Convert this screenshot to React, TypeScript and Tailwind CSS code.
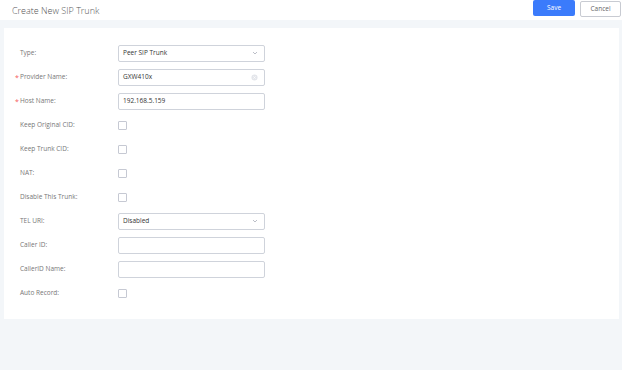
import React from 'react';

type Row =
  | { label: string; required?: boolean; kind: 'select'; value: string }
  | { label: string; required?: boolean; kind: 'input'; value: string; clear?: boolean }
  | { label: string; required?: boolean; kind: 'check' };

const rows: Row[] = [
  { label: 'Type', kind: 'select', value: 'Peer SIP Trunk' },
  { label: 'Provider Name', required: true, kind: 'input', value: 'GXW410x', clear: true },
  { label: 'Host Name', required: true, kind: 'input', value: '192.168.5.159' },
  { label: 'Keep Original CID', kind: 'check' },
  { label: 'Keep Trunk CID', kind: 'check' },
  { label: 'NAT', kind: 'check' },
  { label: 'Disable This Trunk', kind: 'check' },
  { label: 'TEL URI', kind: 'select', value: 'Disabled' },
  { label: 'Caller ID', kind: 'input', value: '' },
  { label: 'CallerID Name', kind: 'input', value: '' },
  { label: 'Auto Record', kind: 'check' },
];

const Chevron = () => (
  <svg width="6" height="4" viewBox="0 0 6 4" className="text-[#b4b8c2]">
    <path d="M1 1l2 2 2-2" fill="none" stroke="currentColor" strokeWidth="0.9" />
  </svg>
);

const ClearIcon = () => (
  <svg width="7" height="7" viewBox="0 0 8 8">
    <circle cx="4" cy="4" r="3.5" fill="#e4e6eb" />
    <path d="M2.7 2.7l2.6 2.6M5.3 2.7L2.7 5.3" stroke="#fff" strokeWidth="0.8" />
  </svg>
);

const Control: React.FC<{ row: Row }> = ({ row }) => {
  if (row.kind === 'check') {
    return <div className="w-[9px] h-[9px] border border-[#c6c9d3] rounded-[1px] bg-white" />;
  }
  return (
    <div className="w-[147px] h-[17px] border border-[#cfd3db] rounded-[2px] bg-white flex items-center justify-between pl-[4px] pr-[6px]">
      <span className="text-[6.5px] text-[#333]">{row.value}</span>
      {row.kind === 'select' && <Chevron />}
      {row.kind === 'input' && row.clear && <ClearIcon />}
    </div>
  );
};

export default function App() {
  return (
    <div className="w-full h-[370px] bg-[#f3f6f9] flex flex-col" style={{ fontFamily: '"Open Sans", "Noto Sans", sans-serif' }}>
      <header className="h-[20px] bg-white flex items-center justify-between pl-[12px] pr-[1px] shrink-0">
        <h1 className="text-[9px] font-light text-[#555] leading-none">Create New SIP Trunk</h1>
        <div className="flex items-start self-start gap-[5px]">
          <button className="w-[42px] h-[16px] bg-[#3b7bfb] text-white text-[6.5px] rounded-[2px]">Save</button>
          <button className="w-[41px] h-[16px] bg-white border border-[#c8cbd2] text-[#666] text-[6.5px] rounded-[2px] mt-[0.5px]">Cancel</button>
        </div>
      </header>

      <main className="flex-1 pt-[8px] pl-[4px] pr-[3px]">
        <div className="bg-white h-[291px] pt-[13px] pl-[11px]">
          {rows.map(row => (
            <div key={row.label} className="h-[24px] flex items-center">
              <div className="w-[103px] flex items-center text-[6.5px] text-[#777]">
                <span className="w-[5px] text-[#f5595a] text-[7px] leading-none">{row.required ? '*' : ''}</span>
                <span>{row.label}:</span>
              </div>
              <Control row={row} />
            </div>
          ))}
        </div>
      </main>
    </div>
  );
}
